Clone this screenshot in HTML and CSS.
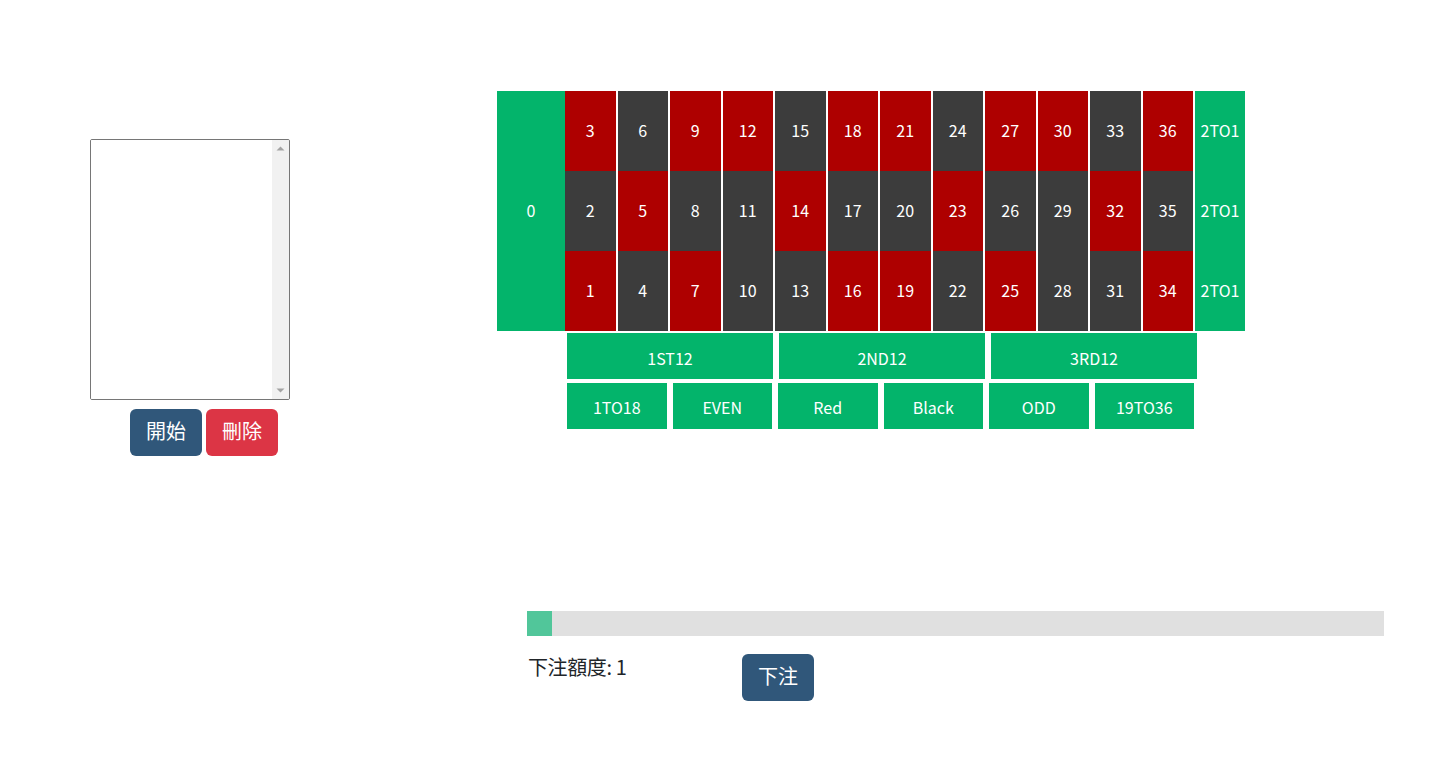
FILE: index.html
```html
<!DOCTYPE html>
<html lang="zh-Hant">
<head>
<meta charset="utf-8">
<title>Roulette</title>
<link rel="stylesheet" href="styles.css">
</head>
<body>
<div class="page">
  <div class="left">
    <div class="log-box">
      <textarea class="log" readonly></textarea>
      <div class="vscroll" aria-hidden="true">
        <svg class="arrow" width="17" height="17" viewBox="0 0 17 17"><polygon points="4.5,10.5 12.5,10.5 8.5,6.5" fill="#a3a3a3"/></svg>
        <svg class="arrow" width="17" height="17" viewBox="0 0 17 17"><polygon points="4.5,6.5 12.5,6.5 8.5,10.5" fill="#a3a3a3"/></svg>
      </div>
    </div>
    <div class="btns">
      <button class="btn btn-blue">開始</button>
      <button class="btn btn-red">刪除</button>
    </div>
  </div>
  <div class="right">
    <div class="board">
      <div class="cell zero">0</div>
      <div class="cell num red">3</div><div class="cell num black">6</div><div class="cell num red">9</div><div class="cell num red">12</div><div class="cell num black">15</div><div class="cell num red">18</div><div class="cell num red">21</div><div class="cell num black">24</div><div class="cell num red">27</div><div class="cell num red">30</div><div class="cell num black">33</div><div class="cell num red">36</div>
      <div class="cell col">2TO1</div>
      <div class="cell num black">2</div><div class="cell num red">5</div><div class="cell num black">8</div><div class="cell num black">11</div><div class="cell num red">14</div><div class="cell num black">17</div><div class="cell num black">20</div><div class="cell num red">23</div><div class="cell num black">26</div><div class="cell num black">29</div><div class="cell num red">32</div><div class="cell num black">35</div>
      <div class="cell col">2TO1</div>
      <div class="cell num red">1</div><div class="cell num black">4</div><div class="cell num red">7</div><div class="cell num black">10</div><div class="cell num black">13</div><div class="cell num red">16</div><div class="cell num red">19</div><div class="cell num black">22</div><div class="cell num red">25</div><div class="cell num black">28</div><div class="cell num black">31</div><div class="cell num red">34</div>
      <div class="cell col">2TO1</div>
    </div>
    <div class="dozens">
      <div class="cell out dozen">1ST12</div>
      <div class="cell out dozen">2ND12</div>
      <div class="cell out dozen">3RD12</div>
    </div>
    <div class="halves">
      <div class="cell out half">1TO18</div>
      <div class="cell out half">EVEN</div>
      <div class="cell out half">Red</div>
      <div class="cell out half">Black</div>
      <div class="cell out half">ODD</div>
      <div class="cell out half">19TO36</div>
    </div>
    <div class="progress"><div class="progress-fill" style="width: 25px"></div></div>
    <div class="bet-row">
      <div class="bet-label">下注額度: 1</div>
      <button class="btn btn-blue bet-btn">下注</button>
    </div>
  </div>
</div>
</body>
</html>
```

FILE: styles.css
```css
html, body {
  margin: 0;
  padding: 0;
  background: #fff;
}
body {
  font-family: "Noto Sans CJK TC", "Noto Sans", sans-serif;
  color: #212529;
  width: 1451px;
  height: 760px;
  overflow: hidden;
}
.page {
  display: flex;
  align-items: flex-start;
}
.left {
  margin-left: 90px;
  margin-top: 139px;
  width: 200px;
}
.log-box {
  display: flex;
  box-sizing: border-box;
  width: 200px;
  height: 261px;
  border: 1px solid #767676;
  border-radius: 2px;
  background: #fff;
  overflow: hidden;
}
.log {
  flex: 1;
  min-width: 0;
  margin: 0;
  padding: 2px;
  border: 0;
  outline: none;
  resize: none;
  overflow: hidden;
  background: #fff;
}
.vscroll {
  width: 17px;
  flex: none;
  background: #f1f1f1;
  display: flex;
  flex-direction: column;
  justify-content: space-between;
}
.arrow {
  display: block;
}
.btns {
  display: flex;
  gap: 4px;
  margin-top: 9px;
  padding-left: 40px;
}
.btn {
  box-sizing: border-box;
  height: 47px;
  padding: 0 16px 3px;
  border: 0;
  border-radius: 6px;
  color: #fff;
  font-family: "Noto Sans CJK TC", sans-serif;
  font-size: 20px;
  line-height: 30px;
  display: inline-flex;
  align-items: center;
  justify-content: center;
  cursor: pointer;
}
.btn-blue { background: #30577a; }
.btn-red { background: #dc3545; }

.right {
  margin-left: 207px;
  margin-top: 91px;
}
.board {
  display: grid;
  grid-template-columns: 68px repeat(12, 52.5px) 50px;
  grid-template-rows: repeat(3, 80px);
  width: 748px;
}
.cell {
  display: flex;
  align-items: center;
  justify-content: center;
  color: #fff;
  font-size: 16px;
  box-sizing: border-box;
}
.board .cell {
  padding-bottom: 2px;
}
.zero {
  grid-row: 1 / 4;
  background: #03b46b;
}
.num {
  border-right: 2px solid #fff;
}
.red { background: #ae0000; }
.black { background: #3c3c3c; }
.col {
  background: #03b46b;
}
.out {
  background: #03b46b;
  height: 46px;
}
.dozens {
  display: flex;
  gap: 6px;
  margin-top: 2px;
  margin-left: 70px;
}
.dozen {
  width: 206px;
  padding-top: 4px;
}
.halves {
  display: flex;
  gap: 6px;
  margin-top: 4px;
  margin-left: 70px;
}
.half {
  width: 99.5px;
  padding-top: 2px;
}

.progress {
  width: 857px;
  height: 25px;
  margin-top: 182px;
  margin-left: 30px;
  background: #e0e0e0;
}
.progress-fill {
  height: 100%;
  background: #51c69a;
}
.bet-row {
  display: flex;
  align-items: flex-start;
  margin-top: 16px;
  margin-left: 31px;
}
.bet-label {
  font-size: 20px;
  line-height: 30px;
  width: 214px;
  letter-spacing: -0.4px;
}
.bet-btn {
  margin-top: 2px;
  width: 72px;
}
```
